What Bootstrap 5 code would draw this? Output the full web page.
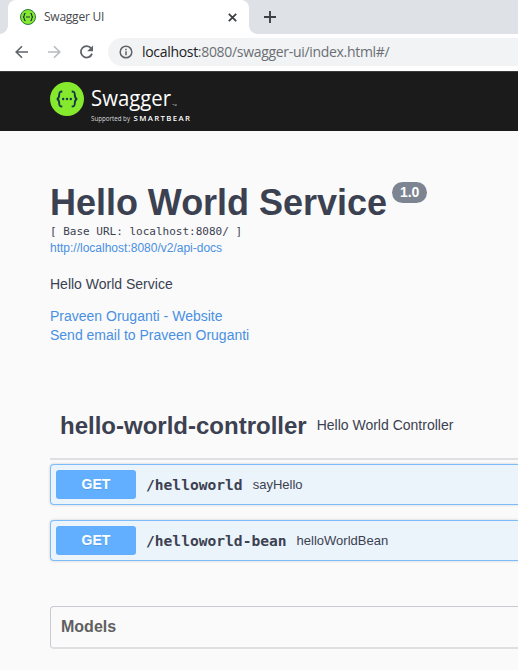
<!DOCTYPE html>
<html lang="en">
<head>
<meta charset="utf-8">
<meta name="viewport" content="width=device-width, initial-scale=1">
<title>Swagger UI</title>
<link href="https://cdn.jsdelivr.net/npm/bootstrap@5.3.0/dist/css/bootstrap.min.css" rel="stylesheet">
<style>
body{background:#fafafa;color:#3b4151;font-family:"Liberation Sans",Arial,sans-serif;height:670px;overflow:hidden;white-space:nowrap}
a{color:#4990e2;text-decoration:none}
svg{display:block;flex:none}
.tab-strip{height:34px;background:#dee1e6}
.browser-tab{width:241px;height:34px;margin-left:8px;background:#fff;border-radius:8px 8px 0 0;position:relative;padding:0 11px 0 12px}
.browser-tab::before,.browser-tab::after{content:"";position:absolute;bottom:0;width:8px;height:8px}
.browser-tab::before{left:-8px;background:radial-gradient(circle at 0 0,transparent 7.5px,#fff 8px)}
.browser-tab::after{right:-8px;background:radial-gradient(circle at 100% 0,transparent 7.5px,#fff 8px)}
.tab-title{font:12px/16px "Open Sans","Noto Sans",sans-serif;color:#45494d;letter-spacing:-.24px;margin-left:8px}
.new-tab{margin-left:15px}
.toolbar{height:37px;background:#fff;padding:0 0 1px 14px}
.address{height:28px;margin-left:13px;background:#f1f3f4;border-radius:14px 0 0 14px;padding-left:11px}
.url{font:14px/20px "Open Sans","Noto Sans",sans-serif;color:#6b6f74;letter-spacing:-.31px;margin-left:9px}
.url span{color:#202124}
.topbar{height:60px;background:#1b1b1b;border-top:1px solid #3c3c3c;padding-left:50px}
.wrapper{padding-left:50px}
.info{padding-top:51px}
.api-title{font-size:36px;line-height:42px;font-weight:700;margin:0;color:#3b4151;letter-spacing:-.03px}
.version{font-size:14px;line-height:20px;height:21px;border-radius:57px;background:#7d8492;color:#fff;font-weight:700;padding:0 8px;margin:0 0 0 5px}
.base-url{font:11px/16px "DejaVu Sans Mono",monospace;color:#3b4151}
.docs{font-size:12px;line-height:16px}
.copy{font-size:14px;line-height:19px}
.intro{margin-top:19px}
.contact{margin-top:13px;line-height:18.5px}
.tag-row{height:69px;border-bottom:2px solid #dedfe2;padding:2px 0 0 10px;margin-top:47px}
.tag-name{font-size:24px;line-height:28px;font-weight:700;margin:0;color:#3b4151}
.tag-desc{font-size:14px;margin-left:10px}
.ops{gap:15px;padding-top:4px}
.opblock{height:41px;border:1px solid #7dbcfb;border-right:0;border-radius:4px 0 0 4px;background:#ebf3fb;box-shadow:0 0 3px rgba(0,0,0,.19);padding-left:5px}
.method{width:80px;height:29px;border-radius:3px;background:#61affe;color:#fff;font-size:14px;font-weight:700;line-height:28px;text-align:center;text-shadow:0 1px 0 rgba(0,0,0,.1)}
.path{font:700 14.6px/20px "DejaVu Sans Mono",monospace;margin-left:10px;color:#3b4151}
.summary{font-size:13px;margin-left:10px}
.models{height:43px;margin-top:45px;border:1px solid #c8cacf;border-bottom:2px solid #dedfe1;border-right:0;border-radius:4px 0 0 4px;padding-left:10px;font-size:16px;font-weight:700;color:#606060}
</style>
</head>
<body>
<header>
  <div class="tab-strip d-flex align-items-center">
    <div class="browser-tab d-flex align-items-center">
      <svg width="16" height="16" viewBox="0 0 16 16"><circle cx="8" cy="8" r="7.500" fill="#85ea2d" stroke="#2b7a3c"/><path d="M5.600 4.400c-1.200 0-1.300.500-1.300 1.600S4 7.800 3 8c1 .2 1.300 1 1.300 2s.1 1.600 1.300 1.600M10.400 4.400c1.200 0 1.300.500 1.300 1.600S12 7.800 13 8c-1 .2-1.300 1-1.300 2s-.1 1.600-1.300 1.600M6 8h4" fill="none" stroke="#173647" stroke-width="1.200"/></svg>
      <span class="tab-title">Swagger UI</span>
      <svg class="ms-auto" width="11" height="11" viewBox="0 0 11 11"><path d="M1.800 1.800l7.400 7.400M9.200 1.800L1.800 9.200" stroke="#3c4043" stroke-width="1.800"/></svg>
    </div>
    <svg class="new-tab" width="12" height="12" viewBox="0 0 12 12"><path d="M6 0v12M0 6h12" stroke="#3c4043" stroke-width="1.900"/></svg>
  </div>
  <div class="toolbar d-flex align-items-center">
    <svg width="16" height="16" viewBox="0 0 16 16"><path d="M14 8H2.500M8 2.200L2.200 8 8 13.800" fill="none" stroke="#5f6368" stroke-width="1.600"/></svg>
    <svg class="ms-3" width="16" height="16" viewBox="0 0 16 16"><path d="M2 8h11.500M8 2.200L13.800 8 8 13.800" fill="none" stroke="#b9bbbe" stroke-width="1.600"/></svg>
    <svg class="ms-3" width="17" height="16" viewBox="0 0 17 16"><path d="M13.200 4.500A5.700 5.700 0 1 0 14 9.600" fill="none" stroke="#5f6368" stroke-width="1.800"/><path d="M15 1.400v5.900H9.100z" fill="#5f6368"/></svg>
    <div class="address d-flex align-items-center flex-grow-1">
      <svg width="14" height="14" viewBox="0 0 14 14"><circle cx="7" cy="7" r="5.800" fill="none" stroke="#5f6368" stroke-width="1.500"/><path d="M7 6.300v4M7 3.700v1.500" stroke="#5f6368" stroke-width="1.500"/></svg>
      <div class="url"><span>localhost</span>:8080/swagger-ui/index.html#/</div>
    </div>
  </div>
</header>
<div class="topbar d-flex align-items-center">
  <svg width="145" height="44" viewBox="0 0 145 44" role="img" aria-label="Swagger, supported by SmartBear">
    <circle cx="17" cy="19" r="17" fill="#85ea2d"/>
    <path d="M12.300 11.500c-2.700 0-3.100.700-3.100 3.300 0 2.700-.2 3.700-2.300 4.200 2.100.500 2.300 1.500 2.300 4.200 0 2.600.4 3.300 3.100 3.300M21.700 11.500c2.700 0 3.100.700 3.100 3.300 0 2.700.2 3.700 2.300 4.200-2.100.500-2.300 1.500-2.300 4.200 0 2.600-.4 3.300-3.100 3.300" fill="none" stroke="#173647" stroke-width="1.900"/>
    <g fill="#173647"><circle cx="13.200" cy="19" r="1.200"/><circle cx="17" cy="19" r="1.200"/><circle cx="20.800" cy="19" r="1.200"/></g>
    <g fill="#fff" font-family="Open Sans, Noto Sans, sans-serif">
      <text x="41" y="26" font-size="22" textLength="80" lengthAdjust="spacingAndGlyphs">Swagger</text>
      <path d="M122.500 24.500h1.500M125 26v-1.500l.6.900.6-.9V26" fill="none" stroke="#bbb" stroke-width=".6"/>
      <text x="41" y="41" font-size="6.500" fill="#ddd" textLength="39" lengthAdjust="spacingAndGlyphs">Supported by</text>
      <text x="83.500" y="41" font-size="7.800" font-weight="600" textLength="56.500" lengthAdjust="spacing">SMARTBEAR</text>
    </g>
  </svg>
</div>
<main class="wrapper">
  <section class="info">
    <div class="d-flex align-items-start">
      <h1 class="api-title">Hello World Service</h1>
      <span class="version">1.0</span>
    </div>
    <div class="base-url">[ Base URL: localhost:8080/ ]</div>
    <div class="docs"><a href="#">http://localhost:8080/v2/api-docs</a></div>
    <div class="copy intro">Hello World Service</div>
    <div class="copy contact d-flex flex-column">
      <a href="#">Praveen Oruganti - Website</a>
      <a href="#">Send email to Praveen Oruganti</a>
    </div>
  </section>
  <section>
    <div class="tag-row d-flex align-items-center">
      <h2 class="tag-name">hello-world-controller</h2>
      <span class="tag-desc">Hello World Controller</span>
    </div>
    <div class="d-flex flex-column ops">
      <div class="opblock d-flex align-items-center"><span class="method">GET</span><span class="path">/helloworld</span><span class="summary">sayHello</span></div>
      <div class="opblock d-flex align-items-center"><span class="method">GET</span><span class="path">/helloworld-bean</span><span class="summary">helloWorldBean</span></div>
    </div>
  </section>
  <section class="models d-flex align-items-center">Models</section>
</main>
<script src="https://cdn.jsdelivr.net/npm/bootstrap@5.3.0/dist/js/bootstrap.bundle.min.js"></script>
</body>
</html>
